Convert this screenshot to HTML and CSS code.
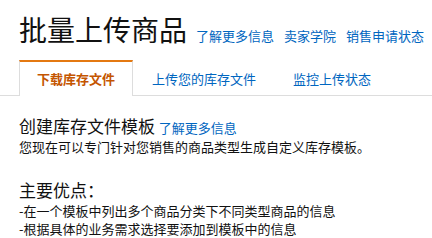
FILE: index.html
```html
<!DOCTYPE html>
<html lang="zh-CN">
  <head>
    <meta charset="UTF-8" />
    <meta name="viewport" content="width=device-width, initial-scale=1.0" />
    <title>批量上传商品</title>
    <link rel="stylesheet" href="styles.css">
  </head>
  <body>
    <div class="header">
      <h1>批量上传商品</h1>
      <a href="#" class="head-link">了解更多信息</a>
      <a href="#" class="head-link">卖家学院</a>
      <a href="#" class="head-link">销售申请状态</a>
    </div>
    <ul class="tabs">
      <li class="tab active">下载库存文件</li>
      <li class="tab"><a href="#">上传您的库存文件</a></li>
      <li class="tab"><a href="#">监控上传状态</a></li>
    </ul>
    <div class="content">
      <h2>创建库存文件模板 <a href="#">了解更多信息</a></h2>
      <p>您现在可以专门针对您销售的商品类型生成自定义库存模板。</p>
      <h2 class="benefits">主要优点：</h2>
      <p>-在一个模板中列出多个商品分类下不同类型商品的信息</p>
      <p>-根据具体的业务需求选择要添加到模板中的信息</p>
    </div>
  </body>
</html>
```

FILE: styles.css
```css
* {
  margin: 0;
  padding: 0;
  box-sizing: border-box;
}
body {
  font-family: 'Noto Sans CJK SC', 'Noto Sans', sans-serif;
  color: #111;
  background: #fff;
  font-size: 13px;
  white-space: nowrap;
}
a {
  color: #0066c0;
  text-decoration: none;
}
.header {
  padding: 12px 0 0 19px;
  display: flex;
  align-items: baseline;
}
h1 {
  font-size: 28px;
  font-weight: normal;
  line-height: 34px;
  margin-right: 9px;
  flex-shrink: 0;
}
.head-link {
  margin-right: 10px;
  flex-shrink: 0;
}
.tabs {
  list-style: none;
  display: flex;
  margin-top: 14px;
  padding-left: 19px;
  border-bottom: 1px solid #ddd;
}
.tab {
  padding: 0 18px 0 19px;
  line-height: 33px;
  border-top: 2px solid transparent;
}
.tab.active {
  color: #c45500;
  font-weight: bold;
  border: 1px solid #ddd;
  border-top: 2px solid #e47911;
  border-bottom: none;
  background: #fff;
  margin-bottom: -1px;
  padding: 0 17px 1px;
}
.content {
  padding: 20px 19px 0;
}
h2 {
  font-size: 17px;
  font-weight: normal;
  line-height: 20px;
}
h2 a {
  font-size: 13px;
}
p {
  line-height: 18px;
}
.benefits {
  margin-top: 22px;
  line-height: 24px;
}
```
